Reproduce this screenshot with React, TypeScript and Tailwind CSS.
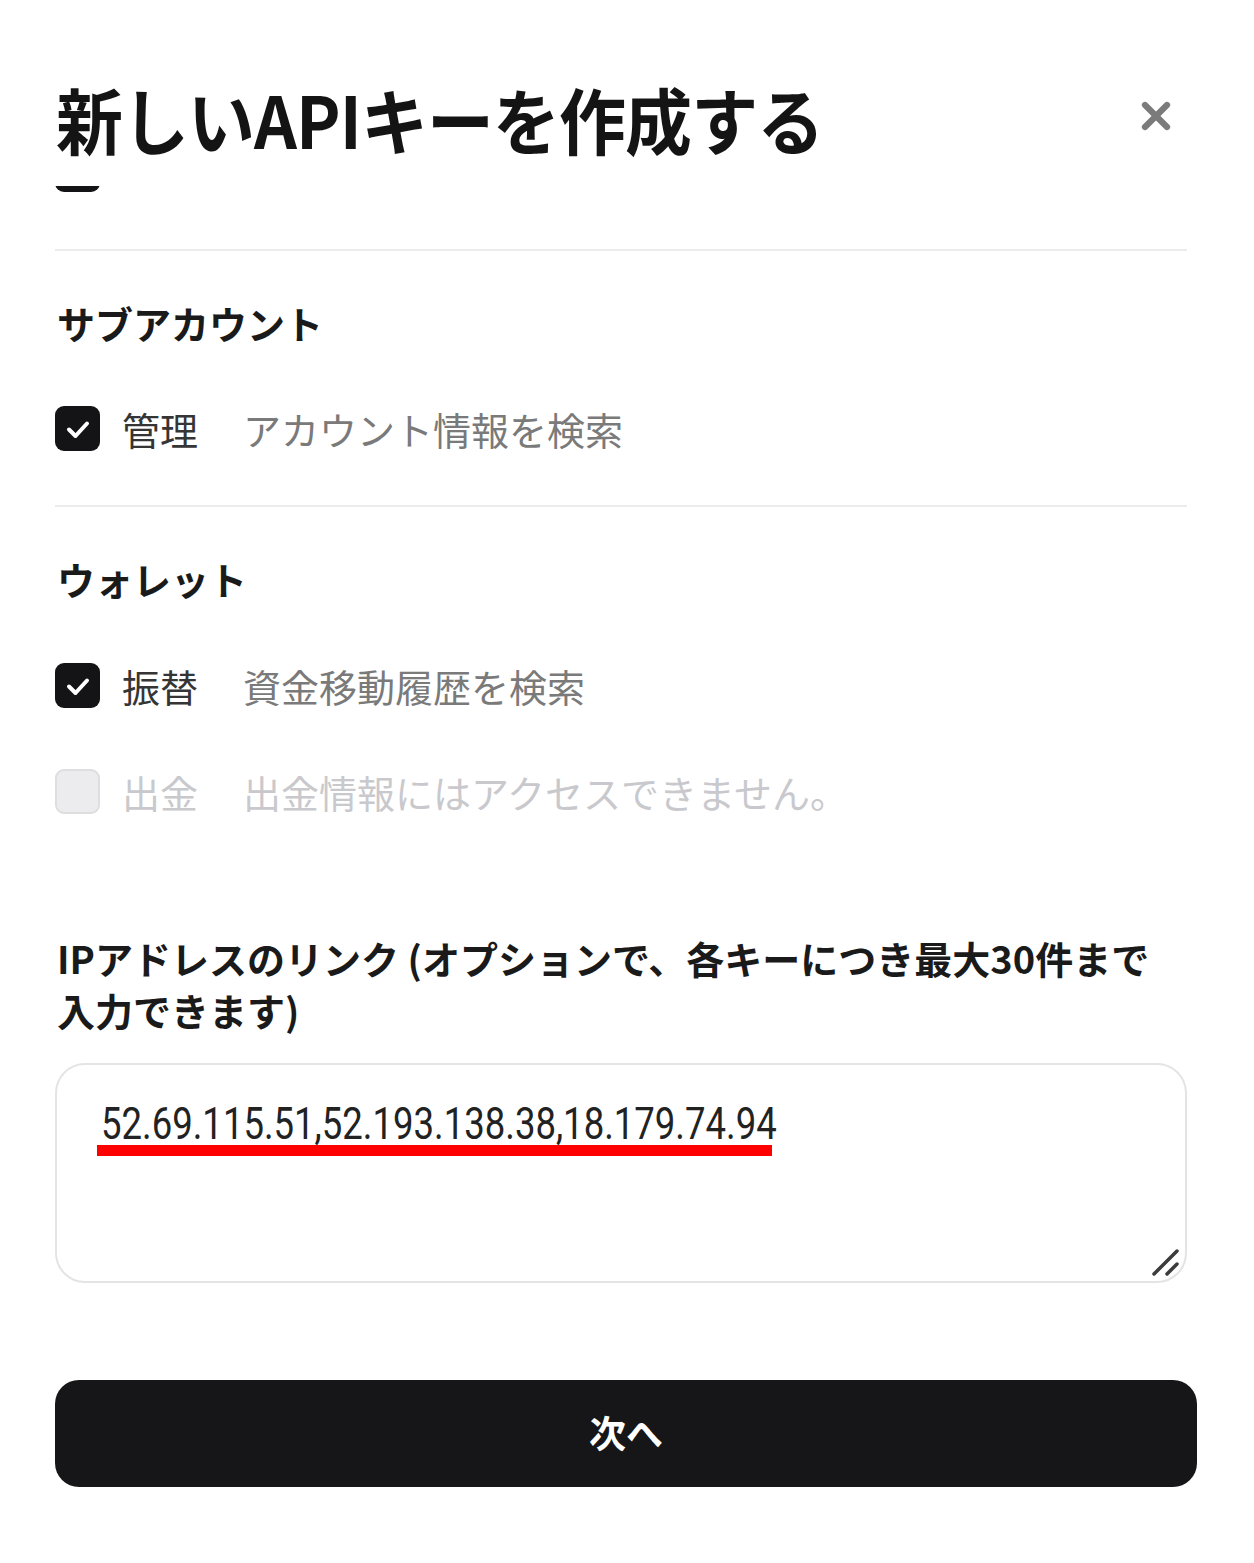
import { X } from 'lucide-react';

function Check({ disabled = false }: { disabled?: boolean }) {
    if (disabled) {
        return <div className="w-[45px] h-[45px] shrink-0 rounded-[9px] bg-[#ececee] border-2 border-[#dedee0]"></div>;
    }
    return (
        <div className="w-[45px] h-[45px] shrink-0 rounded-[9px] bg-[#141416] flex items-center justify-center">
            <svg width="28" height="28" viewBox="0 0 28 28" fill="none">
                <path d="M5 14.5 L11.5 21 L23 8.5" stroke="#fff" strokeWidth="4" strokeLinecap="round" strokeLinejoin="round" />
            </svg>
        </div>
    );
}

function PermRow({ label, desc, disabled = false }: { label: string; desc: string; disabled?: boolean }) {
    return (
        <div className="flex items-center h-[45px]">
            <Check disabled={disabled} />
            <span className={`ml-[22px] w-[77px] text-[38px] leading-none ${disabled ? 'text-[#c9c9cd]' : 'text-[#353535]'}`}>{label}</span>
            <span className={`ml-[44px] text-[38px] leading-none ${disabled ? 'text-[#c9c9cd]' : 'text-[#7a7a7a]'}`}>{desc}</span>
        </div>
    );
}

export default function App() {
    return (
        <div className="w-full min-h-[1563px] bg-white font-['Noto_Sans_CJK_JP',sans-serif] pl-[55px] pr-[57px]">

            {/* Header */}
            <div className="h-[186px] pt-[82px] flex items-start justify-between">
                <h1 className="ml-[1px] h-[72px] origin-left scale-x-[0.93] text-[72px] leading-none font-bold text-[#141414] tracking-[-1px] whitespace-nowrap">新しいAPIキーを作成する</h1>
                <X className="mr-[19px] mt-[12px] w-[44px] h-[44px] text-[#7b7b7b]" strokeWidth={3.4} />
            </div>

            {/* Scroll body */}
            <div className="overflow-hidden">
                <div className="-mt-[39px] h-[45px]">
                    <Check />
                </div>

                <div className="mr-[10px] mt-[57px] h-[2px] bg-[#ececec]"></div>

                <h2 className="mt-[53px] ml-[2px] text-[38px] leading-none font-bold text-[#1a1a1a]">サブアカウント</h2>
                <div className="mt-[64px]">
                    <PermRow label="管理" desc="アカウント情報を検索" />
                </div>

                <div className="mr-[10px] mt-[54px] h-[2px] bg-[#ececec]"></div>

                <h2 className="mt-[53px] ml-[2px] text-[38px] leading-none font-bold text-[#1a1a1a]">ウォレット</h2>
                <div className="mt-[65px]">
                    <PermRow label="振替" desc="資金移動履歴を検索" />
                </div>
                <div className="mt-[61px]">
                    <PermRow label="出金" desc="出金情報にはアクセスできません。" disabled />
                </div>

                <p className="mt-[118px] ml-[2px] text-[38px] leading-[52px] font-bold text-[#1a1a1a] whitespace-nowrap">
                    IPアドレスのリンク (オプションで、各キーにつき最大30件まで<br />入力できます)
                </p>

                {/* Textarea */}
                <div className="relative mr-[10px] mt-[27px] h-[220px] rounded-[30px] border-2 border-[#e4e4e6] pl-[40px] pt-[38px]">
                    <div className="flex flex-col items-start">
                        <span className="ml-[4px] inline-block origin-left scale-x-[0.83] font-['Roboto',sans-serif] text-[44px] leading-[42px] text-[#222] whitespace-nowrap">
                            52.69.115.51,52.193.138.38,18.179.74.94
                        </span>
                        <div className="w-[675px] h-[11px] bg-[#ff0000]"></div>
                    </div>
                    <svg className="absolute right-[4px] bottom-[4px]" width="30" height="30" viewBox="0 0 30 30" fill="none">
                        <path d="M3 27 L26 4" stroke="#3c3c3c" strokeWidth="3.5" strokeLinecap="round" />
                        <path d="M16 27 L26 17" stroke="#3c3c3c" strokeWidth="3.5" strokeLinecap="round" />
                    </svg>
                </div>

                <button className="mt-[97px] w-full h-[107px] rounded-[24px] bg-[#161618] text-white text-[37px] font-bold flex items-center justify-center">
                    <span className="-mt-[2px]">次へ</span>
                </button>
            </div>
        </div>
    );
}
